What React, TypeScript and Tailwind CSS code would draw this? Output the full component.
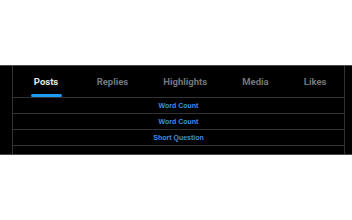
const tabs = ['Posts', 'Replies', 'Highlights', 'Media', 'Likes'];

const rows = ['Word Count', 'Word Count', 'Short Question'];

export default function App() {
  return (
    <div
      className="w-[352px] h-[220px] bg-white pt-[65px]"
      style={{ fontFamily: '"Liberation Sans", Arial, sans-serif' }}
    >
      <div className="bg-black border-y border-[#4a4a4a] pl-[12px] pr-[7px]">
        <div className="border-x border-[#2f3336] h-[88px]">
          {/* Tabs */}
          <div className="flex h-[32px] border-b border-[#2f3336] font-[Roboto,sans-serif]">
            {tabs.map((tab, i) => (
              <div key={tab} className="flex-auto flex flex-col items-center justify-end">
                <span
                  className={
                    i === 0
                      ? 'text-[9.5px] font-bold text-[#e7e9ea] leading-none pb-[8px]'
                      : 'text-[9.5px] font-bold text-[#71767b] leading-none pb-[8px]'
                  }
                >
                  {tab}
                </span>
                {i === 0 ? (
                  <div className="w-[31px] h-[3px] rounded-full bg-[#1d9bf0]" />
                ) : (
                  <div className="h-[3px]" />
                )}
              </div>
            ))}
          </div>

          {/* Rows */}
          {rows.map((label, i) => (
            <div
              key={i}
              className="h-[16px] border-b border-[#2f3336] flex items-center justify-center"
            >
              <span className="text-[7px] font-bold text-[#3d8fe0] leading-none">{label}</span>
            </div>
          ))}
        </div>
      </div>
    </div>
  );
}
